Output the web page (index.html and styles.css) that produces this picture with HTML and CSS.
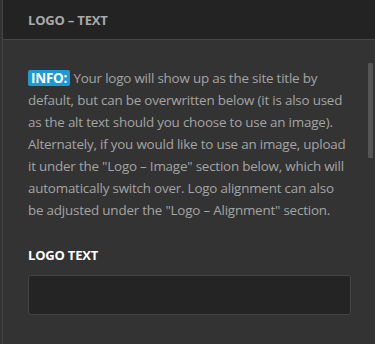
FILE: index.html
```html
<!DOCTYPE html>
<html>
<head>
<meta charset="utf-8">
<link rel="stylesheet" href="styles.css">
</head>
<body>
<div class="panel">
  <div class="header"><h2 class="title">LOGO – TEXT</h2></div>
  <div class="body">
    <div class="scrollbar"></div>
    <p class="info"><span class="badge">INFO:</span> Your logo will show up as the site title by default, but can be overwritten below (it is also used as the alt text should you choose to use an image). Alternately, if you would like to use an image, upload it under the "Logo – Image" section below, which will automatically switch over. Logo alignment can also be adjusted under the "Logo – Alignment" section.</p>
    <div class="field">
      <label class="label">LOGO TEXT</label>
      <div class="input"></div>
    </div>
  </div>
</div>
</body>
</html>
```
FILE: styles.css
```css
html, body {
  margin: 0;
  padding: 0;
  background: #333;
  width: 375px;
  height: 344px;
  overflow: hidden;
}
.panel {
  font-family: "Open Sans", "Noto Sans", sans-serif;
  margin-left: 2px;
  border-left: 1px solid #444;
  height: 344px;
  background: #333;
}
.header {
  background: #232323;
  height: 40px;
  border-bottom: 1px solid #474747;
  box-sizing: border-box;
  padding-left: 25px;
  padding-top: 1px;
  display: flex;
  align-items: center;
}
.title {
  margin: 0;
  font-size: 13px;
  font-weight: 700;
  color: #aaa;
  letter-spacing: -0.2px;
}
.body {
  position: relative;
  padding: 27px 24px 0 25px;
}
.scrollbar {
  position: absolute;
  right: 2px;
  top: 23px;
  width: 5px;
  height: 95px;
  background: #555;
  border-radius: 1px;
}
.info {
  margin: 0;
  font-size: 13.4px;
  line-height: 22px;
  letter-spacing: -0.2px;
  color: #a4a4a4;
}
.badge {
  display: inline-block;
  background: #1b9ad6;
  color: #fff;
  font-weight: 700;
  padding: 0 3px;
  line-height: 16px;
  border-radius: 2px;
  letter-spacing: -0.2px;
}
.field {
  margin-top: 26px;
}
.label {
  display: block;
  font-size: 13px;
  font-weight: 700;
  color: #fff;
  line-height: 16px;
  letter-spacing: -0.2px;
}
.input {
  margin-top: 12px;
  height: 40px;
  box-sizing: border-box;
  background: #242424;
  border: 1px solid #444;
  border-radius: 3px;
}
```
